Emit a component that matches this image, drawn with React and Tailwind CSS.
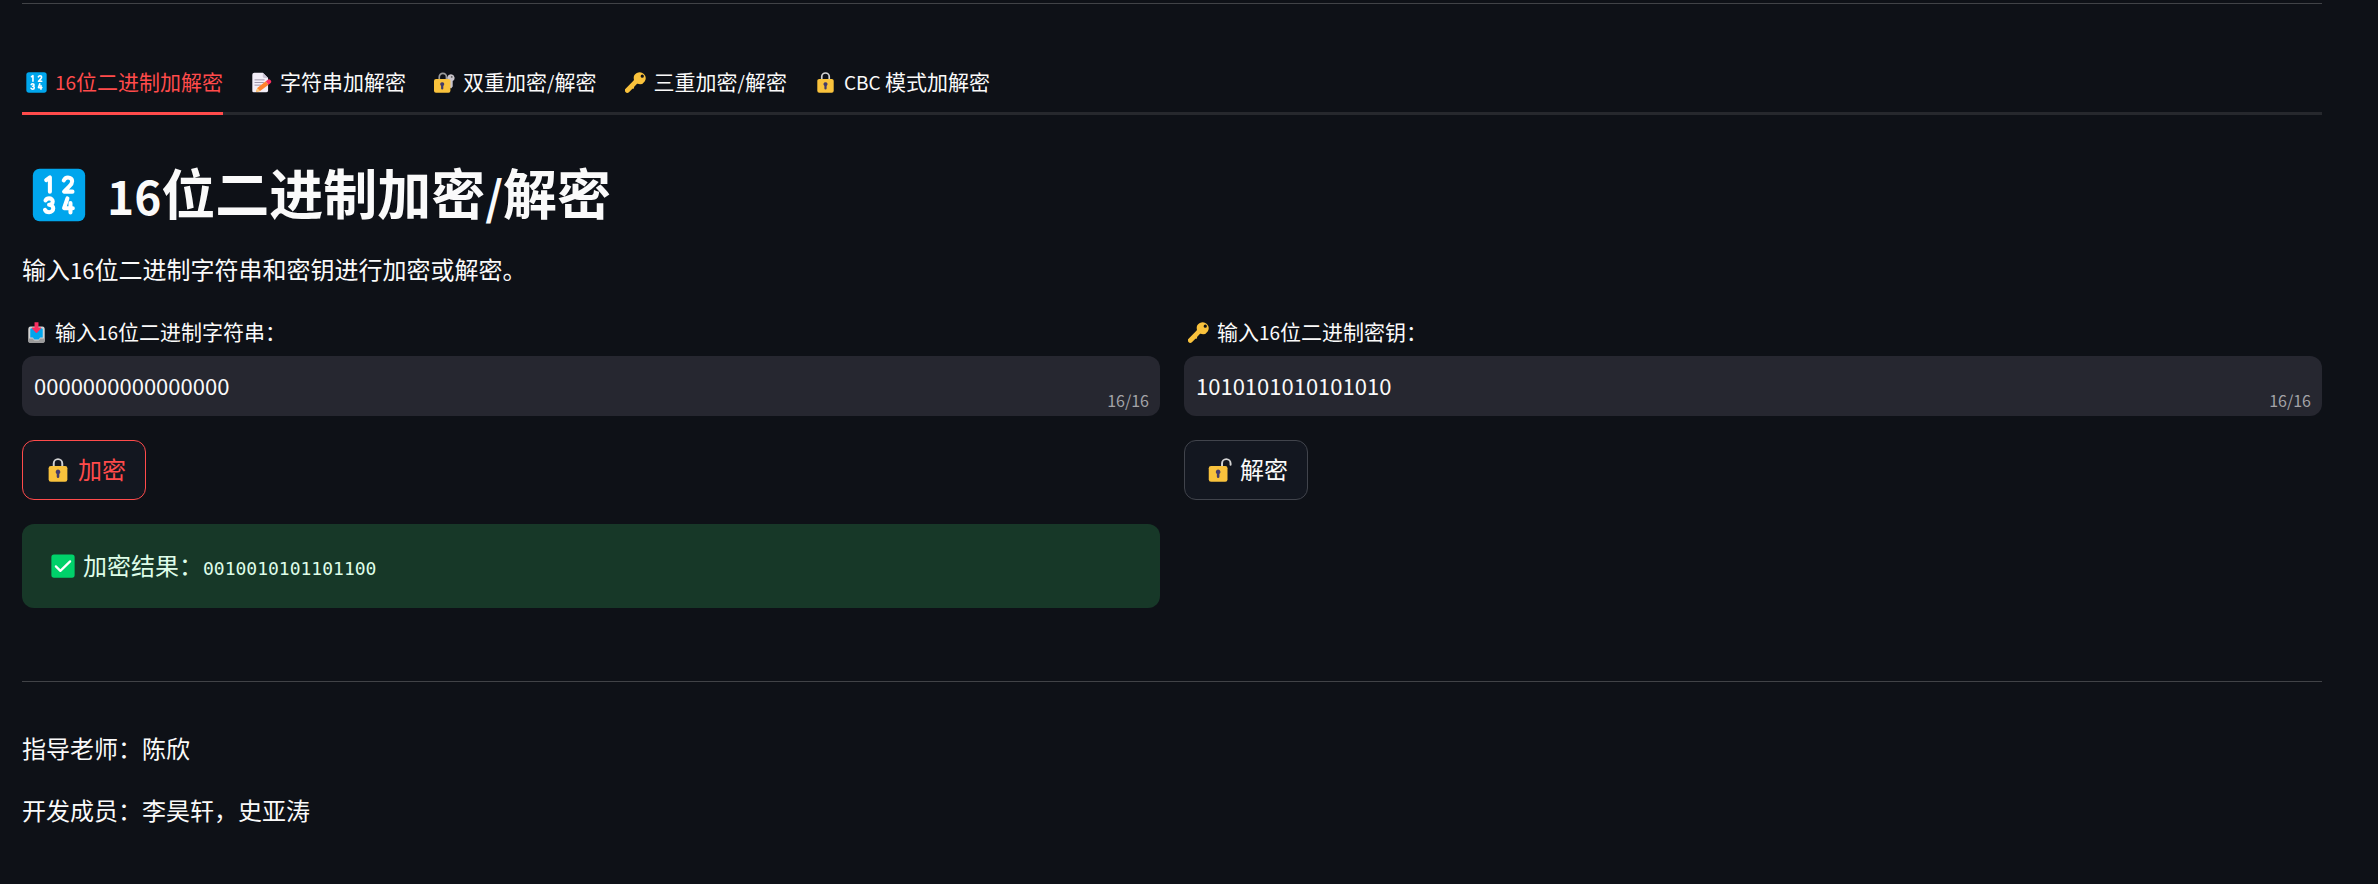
import { useState } from "react";

const ICONS = {
  numbers: (
    <>
      <rect x=".5" y=".5" width="31" height="31" rx="4" fill="#00a6ed" />
      <g fill="none" stroke="#fff" strokeWidth="2.4" strokeLinecap="round" strokeLinejoin="round">
        <path d="M8.4 7.2 10.6 5.6V14" />
        <path d="M18.8 7.400c.5-1.200 1.400-1.800 2.500-1.800 1.500 0 2.500.9 2.500 2.200 0 1.200-.7 2.100-1.700 3.100L19 14H24" />
        <path d="M8 19.200c.5-.9 1.200-1.200 2.100-1.200 1.300 0 2.200.8 2.200 1.900s-.9 1.900-2.200 1.900c1.400 0 2.500.8 2.500 2.100s-1.100 2.300-2.500 2.300c-1.100 0-2-.5-2.400-1.400" />
        <path d="M21 18 19 23.800H24.200M22.800 20.800V26.300" />
      </g>
    </>
  ),
  memo: (
    <>
      <path d="M2 4a3 3 0 0 1 3-3h13l8 8v19a3 3 0 0 1-3 3H4a2 2 0 0 1-2-2z" fill="#f3eef8" />
      <path d="M18 1v6a2 2 0 0 0 2 2h6z" fill="#cdc4d6" />
      <path d="M6 12h14M6 16h13M6 20h9" stroke="#998ea4" strokeWidth="1.4" strokeLinecap="round" />
      <path d="M9.500 24.500 22.500 14l4.300 5.300-13 9.700-6 1.300z" fill="#ff822d" />
      <path d="m9.500 24.500 4.300 4.500-6 1.500z" fill="#ffce7c" />
      <path d="m22.500 14 2.600-2a3.300 3.300 0 0 1 4.400 5.200l-2.700 2.100z" fill="#f92f60" />
    </>
  ),
  lockKey: (
    <>
      <path d="M8 12V7.500a5.500 5.500 0 0 1 11 0V12" fill="none" stroke="#9b9b9b" strokeWidth="2.600" />
      <path d="M26 3.500a5.500 5.500 0 0 1 2.500 10.300V22L26 25l-3-2V13.800A5.500 5.500 0 0 1 26 3.500z" fill="#c9c5cc" />
      <circle cx="27" cy="7.500" r="1.400" fill="#636363" />
      <rect x="0" y="10.500" width="25" height="21" rx="3" fill="#f9c23c" />
      <path d="M12.500 15.500a3.100 3.100 0 0 0-1.700 5.700V25a1.700 1.700 0 0 0 3.400 0v-3.800a3.100 3.100 0 0 0-1.700-5.700z" fill="#433b6b" />
    </>
  ),
  key: (
    <path
      fillRule="evenodd"
      fill="#f9c23c"
      d="M28.800 3.200a9 9 0 0 0-15.200 8.400c.1.500 0 1-.4 1.400L1.200 25a3.400 3.400 0 0 0 4.800 5.800l4.200-4.200c.5-.5.6-1.200 1.300-1.200h1.100c.6 0 1.200-.3 1.200-1v-1.300c0-.7.5-1 1-1.500l3.200-3.200c.4-.4.9-.5 1.400-.4A9 9 0 0 0 28.800 3.200zM26.300 8.800a2.500 2.500 0 1 1 0-5 2.500 2.500 0 0 1 0 5z"
    />
  ),
  lock: (
    <>
      <path d="M10.300 12V7.200a5.700 5.700 0 0 1 11.400 0V12" fill="none" stroke="#d3d3d3" strokeWidth="2.600" />
      <rect x="3.500" y="10.500" width="25" height="21" rx="3" fill="#f9c23c" />
      <path d="M16 15.500a3.100 3.100 0 0 0-1.700 5.700V25a1.700 1.700 0 0 0 3.400 0v-3.800a3.100 3.100 0 0 0-1.700-5.700z" fill="#433b6b" />
    </>
  ),
  unlock: (
    <>
      <path d="M18.700 12V7.200a5.700 5.700 0 0 1 11.400 0V9" fill="none" stroke="#d3d3d3" strokeWidth="2.600" strokeLinecap="round" />
      <rect x="1" y="10.500" width="25" height="21" rx="3" fill="#f9c23c" />
      <path d="M13.500 15.500a3.100 3.100 0 0 0-1.700 5.700V25a1.700 1.700 0 0 0 3.400 0v-3.800a3.100 3.100 0 0 0-1.700-5.700z" fill="#433b6b" />
    </>
  ),
  inbox: (
    <>
      <path d="M7 7h18a3.500 3.500 0 0 1 3.500 3.200V29a2.500 2.500 0 0 1-2.500 2.500H6A2.500 2.500 0 0 1 3.500 29V10.200A3.500 3.500 0 0 1 7 7z" fill="#d3d3d3" />
      <path d="M3.500 25h6.500c1.500 0 1.500 3 3 3h6c1.500 0 1.500-3 3-3h6.500v4a2.500 2.500 0 0 1-2.500 2.500H6A2.500 2.500 0 0 1 3.500 29z" fill="#9b9b9b" />
      <path d="M8.500 9.500h15a2 2 0 0 1 2 1.800V23.500H22c-1.500 0-1.500 3-3 3h-6c-1.500 0-1.500-3-3-3H6.500V11.300a2 2 0 0 1 2-1.800z" fill="#00a6ed" />
      <path d="M13 .5h6v8h3c1 0 1.400 1 .7 1.700l-5.800 6a1.300 1.300 0 0 1-1.800 0l-5.800-6c-.7-.7-.3-1.700.7-1.700h3z" fill="#f92f60" />
    </>
  ),
  check: (
    <>
      <rect x=".5" y=".5" width="31" height="31" rx="3.500" fill="#00d26a" />
      <path d="m6.500 16.500 6 6L25.500 9.800" fill="none" stroke="#fff" strokeWidth="3" strokeLinecap="round" strokeLinejoin="round" />
    </>
  ),
};

function Icon({ name, className }) {
  return (
    <svg viewBox="0 0 32 32" aria-hidden="true" className={`shrink-0 ${className}`}>
      {ICONS[name]}
    </svg>
  );
}

function Small({ children }) {
  return <span className="text-[19px]">{children}</span>;
}

const TABS = [
  { icon: "numbers", label: <><Small>16</Small>位二进制加解密</> },
  { icon: "memo", label: "字符串加解密" },
  { icon: "lockKey", label: <>双重加密<Small>/</Small>解密</> },
  { icon: "key", label: <>三重加密<Small>/</Small>解密</> },
  { icon: "lock", label: <><Small>CBC </Small>模式加解密</> },
];

function Field({ id, icon, kind, initial }) {
  const [value, setValue] = useState(initial);
  return (
    <div className="flex flex-col gap-2">
      <label htmlFor={id} className="flex h-8 items-center gap-2 pl-1 text-[21px]">
        <Icon name={icon} className="size-[21px]" />
        <span className="pb-0.5">
          输入<Small>16</Small>位二进制{kind}：
        </span>
      </label>
      <div className="relative">
        <input
          id={id}
          type="text"
          maxLength={16}
          value={value}
          onChange={(e) => setValue(e.target.value)}
          className="block h-15 w-full rounded-xl bg-[#262730] px-3 pb-0.5 text-[22px] text-[#fafafa] outline-none"
        />
        <span className="absolute right-[11px] bottom-0.5 text-base leading-7 text-[#a3a3a8]">
          {value.length}/16
        </span>
      </div>
    </div>
  );
}

function ActionButton({ icon, children, active }) {
  return (
    <button
      type="button"
      className={`flex h-15 items-center gap-2 self-start justify-self-start rounded-xl border bg-[#131720] pr-[19px] pl-[23px] ${
        active ? "border-[#ff4b4b] text-[#ff4b4b]" : "border-[#41444c] text-[#fafafa]"
      }`}
    >
      <Icon name={icon} className="size-6" />
      <span className="pb-0.5">{children}</span>
    </button>
  );
}

export default function App() {
  const [tab, setTab] = useState(0);
  return (
    <main className="min-h-screen bg-[#0e1117] pt-[3px] pr-14 pb-10 pl-[22px] font-['Noto_Sans_CJK_SC',sans-serif] text-2xl leading-9 text-[#fafafa]">
      <hr className="border-[#414347]" />

      <div role="tablist" className="mt-12 flex gap-6 border-b-3 border-[#26282d]">
        {TABS.map((t, i) => (
          <button
            key={t.icon}
            type="button"
            role="tab"
            aria-selected={tab === i}
            onClick={() => setTab(i)}
            className={`-mb-[3px] flex h-[63px] items-center gap-2 border-b-3 pl-1 text-[21px] leading-8 whitespace-pre ${
              tab === i ? "border-[#ff4b4b] text-[#ff4b4b]" : "border-transparent"
            }`}
          >
            <Icon name={t.icon} className="size-[21px]" />
            <span className="pb-0.5">{t.label}</span>
          </button>
        ))}
      </div>

      <h2 className="mt-11 flex h-[72px] items-center gap-[21px] pl-[10px] text-[54px] leading-[72px] font-bold">
        <Icon name="numbers" className="size-[54px]" />
        <span className="pb-1">
          <span className="text-[46px]">16</span>位二进制加密<span className="text-[46px]">/</span>解密
        </span>
      </h2>

      <p className="mt-5">
        输入<span className="text-[22px]">16</span>位二进制字符串和密钥进行加密或解密。
      </p>

      <div className="mt-[29px] grid grid-cols-2 gap-6">
        <Field id="plain" icon="inbox" kind="字符串" initial="0000000000000000" />
        <Field id="key" icon="key" kind="密钥" initial="1010101010101010" />
        <div className="flex flex-col gap-6">
          <ActionButton icon="lock" active>
            加密
          </ActionButton>
          <div role="status" className="flex h-21 items-center gap-2 rounded-xl bg-[#173828] px-[29px] text-[#dffde9]">
            <Icon name="check" className="size-6" />
            <span className="pb-0.5">
              加密结果：
              <code className="font-['DejaVu_Sans_Mono',monospace] text-lg">0010010101101100</code>
            </span>
          </div>
        </div>
        <ActionButton icon="unlock">解密</ActionButton>
      </div>

      <hr className="mt-[73px] border-[#414347]" />

      <footer className="mt-12 flex flex-col gap-[26px]">
        <p>指导老师：陈欣</p>
        <p>开发成员：李昊轩，史亚涛</p>
      </footer>
    </main>
  );
}
